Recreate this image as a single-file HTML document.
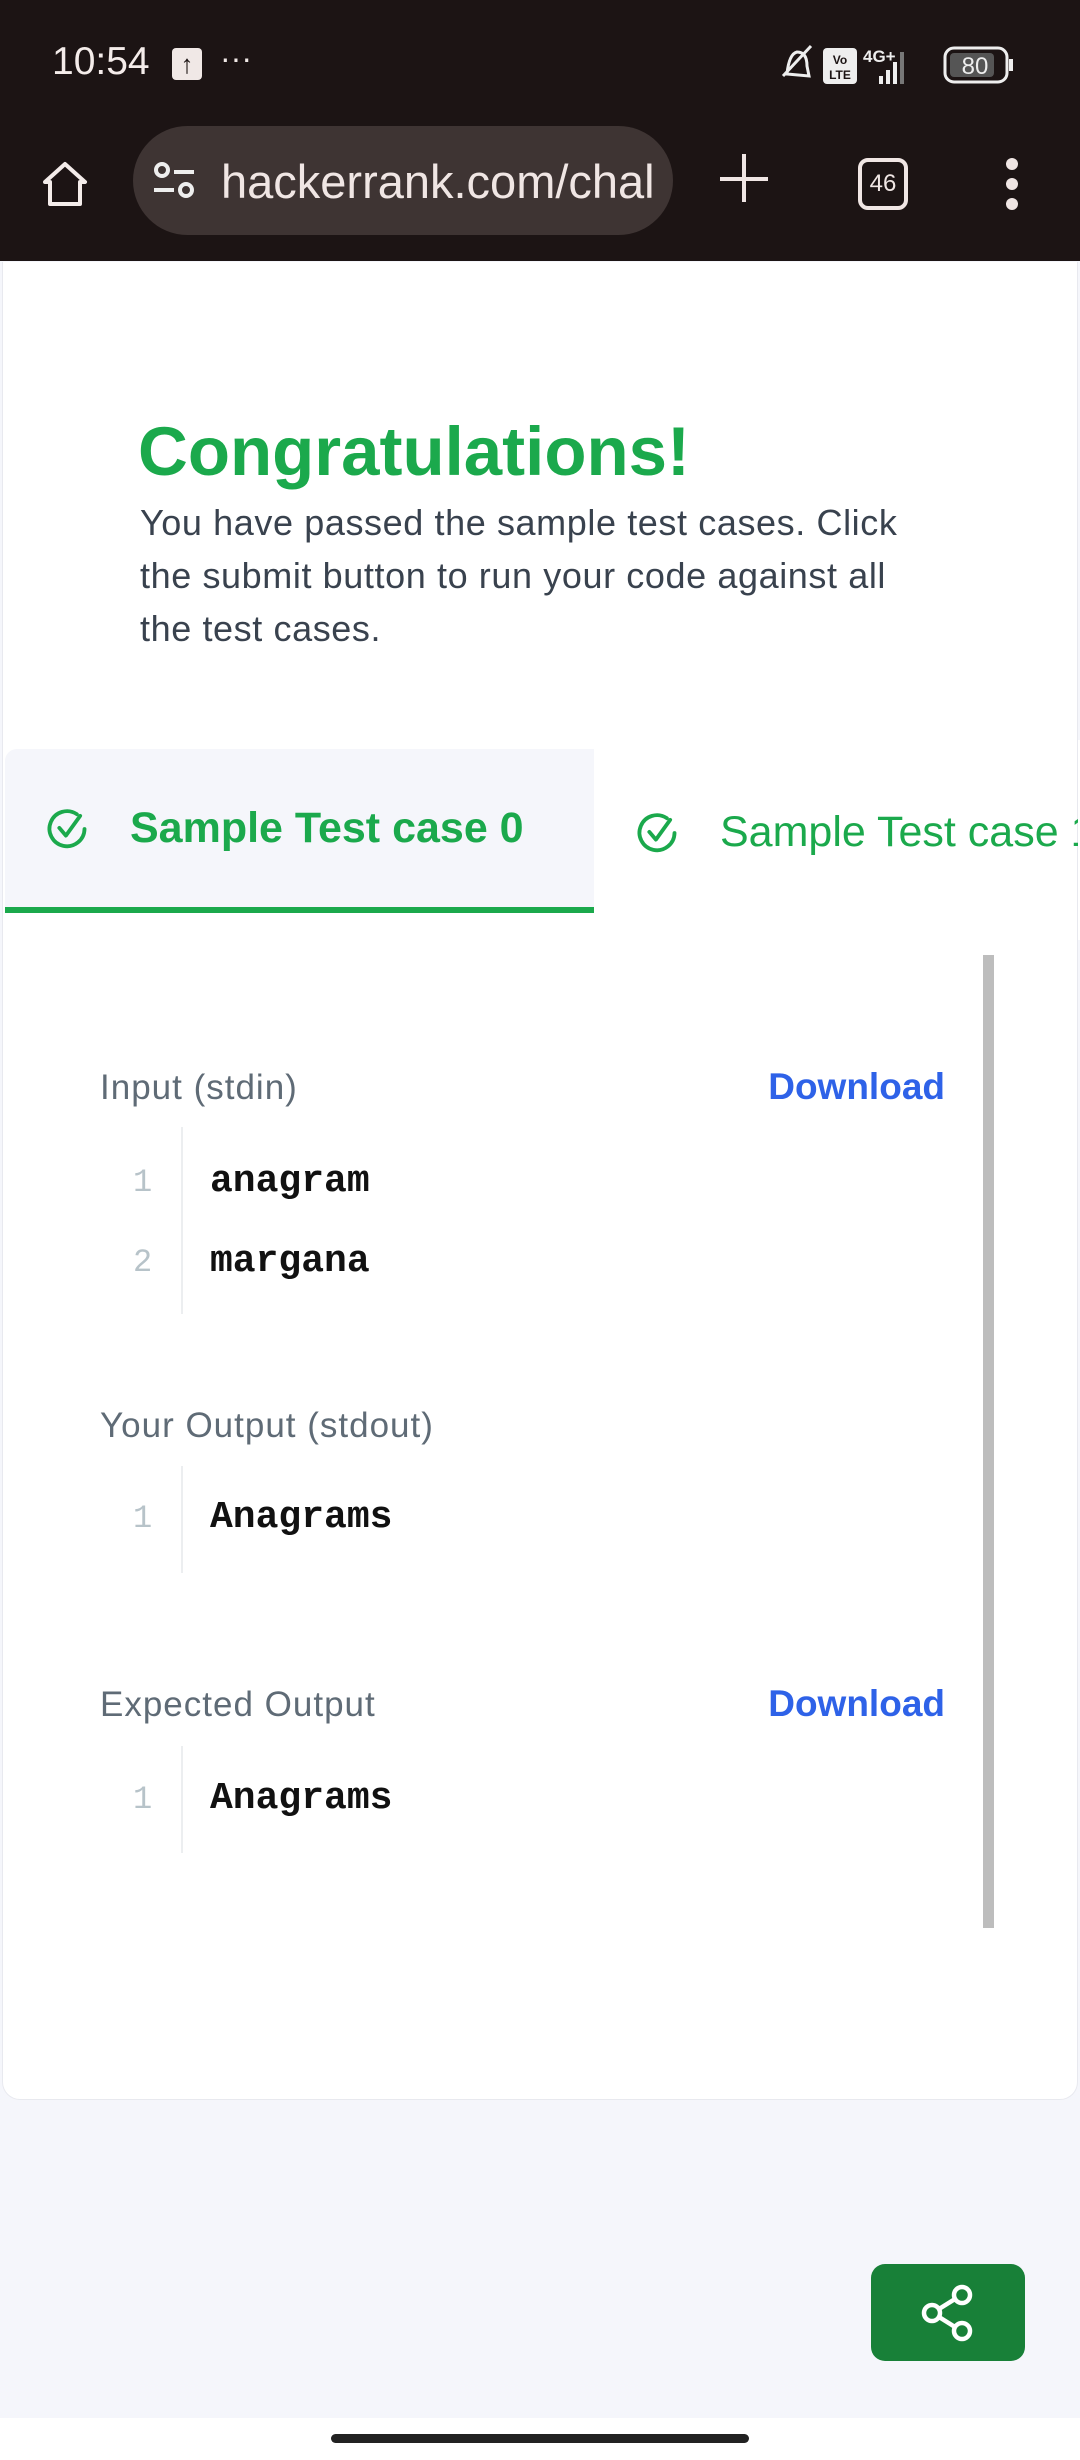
<!DOCTYPE html>
<html><head><meta charset="utf-8"><style>
*{margin:0;padding:0;box-sizing:border-box}
body{width:1080px;height:2460px;background:#f5f6fb;font-family:"Liberation Sans",sans-serif;position:relative;overflow:hidden}
.abs{position:absolute}
.top{left:0;top:0;width:1080px;height:261px;background:#1c1414}
.card{left:2px;top:262px;width:1076px;height:1838px;background:#fff;border-radius:0 0 18px 18px;border:1px solid #e8e9ef;border-top:none}
.lbl{font-size:35px;color:#5f6b76;letter-spacing:1px}
.dl{font-size:37px;color:#2e62e8;font-weight:bold;right:135px}
.num{font-family:"Liberation Mono",monospace;font-size:32px;color:#b7c3c9;left:133px}
.code{font-family:"Liberation Mono",monospace;font-size:38px;font-weight:bold;color:#111;left:210px}
.div{left:181px;width:2px;background:#eceef0}
</style></head><body>
<div class="abs top"></div>
<div class="abs" style="left:52px;top:40px;font-size:39px;color:#f4ecea">10:54</div>
<div class="abs" style="left:172px;top:48px;width:30px;height:32px;background:#f0e8e6;border-radius:4px;color:#1c1414;font-size:26px;text-align:center;line-height:32px;font-weight:bold">↑</div>
<div class="abs" style="left:220px;top:40px;font-size:32px;color:#f0e8e6">···</div>
<svg class="abs" style="left:775px;top:40px" width="240" height="52" viewBox="0 0 240 48">
<path d="M8 34 L36 4 M12 32 Q14 12 22 10 Q32 10 32 24 L34 34 Z" stroke="#eee" stroke-width="3" fill="none"/>
<rect x="48" y="6" width="34" height="36" rx="4" fill="#eee"/>
<text x="65" y="22" font-size="12" text-anchor="middle" fill="#1c1414" font-weight="bold">Vo</text>
<text x="65" y="37" font-size="12" text-anchor="middle" fill="#1c1414" font-weight="bold">LTE</text>
<text x="88" y="20" font-size="17" fill="#eee" font-weight="bold">4G+</text>
<rect x="104" y="34" width="4" height="8" fill="#eee"/><rect x="111" y="28" width="4" height="14" fill="#eee"/><rect x="118" y="20" width="4" height="22" fill="#eee"/><rect x="125" y="10" width="4" height="32" fill="#777"/>
<rect x="170" y="6" width="62" height="34" rx="9" stroke="#eee" stroke-width="3" fill="none"/>
<rect x="175" y="11" width="44" height="24" rx="4" fill="#555"/>
<text x="200" y="32" font-size="24" text-anchor="middle" fill="#eee">80</text>
<rect x="234" y="17" width="4" height="12" fill="#eee"/></svg>
<svg class="abs" style="left:40px;top:160px" width="50" height="50" viewBox="0 0 50 50"><path d="M5 22 L25 4 L45 22 L40 22 L40 44 L10 44 L10 22 Z" stroke="#f4ecea" stroke-width="4" fill="none" stroke-linejoin="round"/></svg>
<div class="abs" style="left:133px;top:126px;width:540px;height:109px;background:#3e3433;border-radius:55px"></div>
<svg class="abs" style="left:152px;top:160px" width="46" height="44" viewBox="0 0 46 44"><circle cx="10" cy="10" r="6" stroke="#eee" stroke-width="4" fill="none"/><line x1="22" y1="12" x2="42" y2="12" stroke="#eee" stroke-width="4"/><line x1="2" y1="30" x2="22" y2="30" stroke="#eee" stroke-width="4"/><circle cx="34" cy="30" r="6" stroke="#eee" stroke-width="4" fill="none"/></svg>
<div class="abs" style="left:221px;top:154px;font-size:47px;color:#f0e6e4">hackerrank.com/chal</div>
<div class="abs" style="left:720px;top:154px;width:50px;height:50px"><div class="abs" style="left:0;top:23px;width:48px;height:4px;background:#f0e6e4"></div><div class="abs" style="left:22px;top:0;width:4px;height:48px;background:#f0e6e4"></div></div>
<div class="abs" style="left:858px;top:158px;width:50px;height:52px;border:4px solid #f0e6e4;border-radius:10px;color:#f0e6e4;font-size:24px;text-align:center;line-height:44px">46</div>
<div class="abs" style="left:1006px;top:158px;width:14px"><div style="width:12px;height:12px;border-radius:6px;background:#f0e6e4;margin-bottom:8px"></div><div style="width:12px;height:12px;border-radius:6px;background:#f0e6e4;margin-bottom:8px"></div><div style="width:12px;height:12px;border-radius:6px;background:#f0e6e4"></div></div>

<div class="abs card"></div>
<div class="abs" style="left:138px;top:412px;font-size:69px;font-weight:bold;color:#1ba94c">Congratulations!</div>
<div class="abs" style="left:140px;top:496px;width:790px;font-size:36px;line-height:53px;color:#39424e;letter-spacing:0.6px">You have passed the sample test cases. Click the submit button to run your code against all the test cases.</div>

<div class="abs" style="left:5px;top:749px;width:589px;height:159px;background:#f5f6fb;border-radius:12px 0 0 0"></div>
<div class="abs" style="left:5px;top:907px;width:589px;height:6px;background:#1ba94c"></div>
<svg class="abs" style="left:44px;top:806px" width="46" height="46" viewBox="0 0 42 42"><path d="M37 21 A16 16 0 1 1 30 7.5" stroke="#1ba94c" stroke-width="3.5" fill="none" stroke-linecap="round"/><path d="M14 20 L20 27 L33 9" stroke="#1ba94c" stroke-width="3.5" fill="none" stroke-linecap="round" stroke-linejoin="round"/></svg>
<div class="abs" style="left:130px;top:804px;font-size:43px;font-weight:bold;color:#1ba94c">Sample Test case 0</div>
<svg class="abs" style="left:634px;top:810px" width="46" height="46" viewBox="0 0 42 42"><path d="M37 21 A16 16 0 1 1 30 7.5" stroke="#1ba94c" stroke-width="3.5" fill="none" stroke-linecap="round"/><path d="M14 20 L20 27 L33 9" stroke="#1ba94c" stroke-width="3.5" fill="none" stroke-linecap="round" stroke-linejoin="round"/></svg>
<div class="abs" style="left:720px;top:808px;font-size:43px;color:#1ba94c;white-space:nowrap">Sample Test case 1</div>
<div class="abs" style="left:1078px;top:740px;width:4px;height:200px;background:#fff"></div>

<div class="abs" style="left:983px;top:955px;width:11px;height:973px;background:#bdbdbd"></div>

<div class="abs lbl" style="left:100px;top:1068px">Input (stdin)</div>
<div class="abs dl" style="top:1066px">Download</div>
<div class="abs div" style="top:1127px;height:187px"></div>
<div class="abs num" style="top:1164px">1</div><div class="abs code" style="top:1160px">anagram</div>
<div class="abs num" style="top:1244px">2</div><div class="abs code" style="top:1240px">margana</div>

<div class="abs lbl" style="left:100px;top:1406px">Your Output (stdout)</div>
<div class="abs div" style="top:1466px;height:107px"></div>
<div class="abs num" style="top:1500px">1</div><div class="abs code" style="top:1496px">Anagrams</div>

<div class="abs lbl" style="left:100px;top:1685px">Expected Output</div>
<div class="abs dl" style="top:1683px">Download</div>
<div class="abs div" style="top:1746px;height:107px"></div>
<div class="abs num" style="top:1781px">1</div><div class="abs code" style="top:1777px">Anagrams</div>

<div class="abs" style="left:871px;top:2264px;width:154px;height:97px;background:#188038;border-radius:14px"></div>
<svg class="abs" style="left:918px;top:2284px" width="60" height="58" viewBox="0 0 60 58"><circle cx="44" cy="11" r="8" stroke="#fff" stroke-width="4.5" fill="none"/><circle cx="14" cy="29" r="8" stroke="#fff" stroke-width="4.5" fill="none"/><circle cx="44" cy="47" r="8" stroke="#fff" stroke-width="4.5" fill="none"/><line x1="21" y1="25" x2="37" y2="15" stroke="#fff" stroke-width="4.5"/><line x1="21" y1="33" x2="37" y2="43" stroke="#fff" stroke-width="4.5"/></svg>
<div class="abs" style="left:0;top:2418px;width:1080px;height:42px;background:#fff"></div>
<div class="abs" style="left:331px;top:2434px;width:418px;height:9px;border-radius:5px;background:#222"></div>
</body></html>
